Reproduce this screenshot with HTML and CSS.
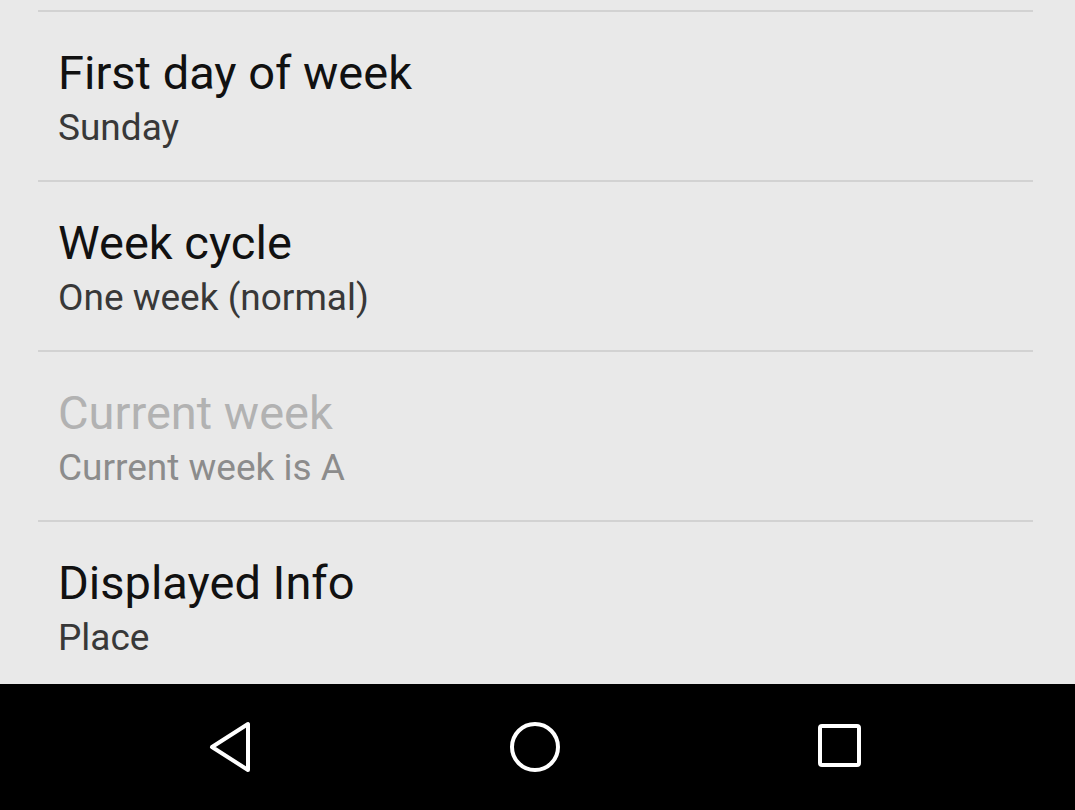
FILE: index.html
```html
<!DOCTYPE html>
<html lang="en">
<head>
<meta charset="utf-8">
<title>Settings</title>
<link rel="stylesheet" href="styles.css">
</head>
<body>
<div class="screen">
  <main class="list">
    <div class="divider"></div>
    <div class="row">
      <div class="title">First day of week</div>
      <div class="summary">Sunday</div>
    </div>
    <div class="divider"></div>
    <div class="row">
      <div class="title">Week cycle</div>
      <div class="summary">One week (normal)</div>
    </div>
    <div class="divider"></div>
    <div class="row disabled">
      <div class="title">Current week</div>
      <div class="summary">Current week is A</div>
    </div>
    <div class="divider"></div>
    <div class="row">
      <div class="title">Displayed Info</div>
      <div class="summary">Place</div>
    </div>
  </main>
  <nav class="navbar">
    <svg class="nav-icon" width="60" height="60" viewBox="0 0 60 60">
      <path d="M48 7 L48 53 L12 30 Z" fill="none" stroke="#fff" stroke-width="4" stroke-linejoin="round"/>
    </svg>
    <svg class="nav-icon" width="60" height="60" viewBox="0 0 60 60">
      <circle cx="30" cy="30" r="23" fill="none" stroke="#fff" stroke-width="4"/>
    </svg>
    <svg class="nav-icon" width="60" height="60" viewBox="0 0 60 60">
      <rect x="10" y="9" width="39" height="39" rx="2" fill="none" stroke="#fff" stroke-width="4"/>
    </svg>
  </nav>
</div>
</body>
</html>
```

FILE: styles.css
```css
html, body {
  margin: 0;
  padding: 0;
}

body {
  width: 1075px;
  height: 810px;
  overflow: hidden;
  background: #e9e9e9;
  font-family: Roboto, "Noto Sans", "Liberation Sans", sans-serif;
}

.screen {
  display: flex;
  flex-direction: column;
  height: 810px;
}

.list {
  height: 684px;
  overflow: hidden;
  padding-top: 10px;
  box-sizing: border-box;
  background: #e9e9e9;
}

.divider {
  height: 2px;
  margin: 0 42px 0 38px;
  background: #d2d2d2;
}

.row {
  display: flex;
  flex-direction: column;
  padding: 34px 40px 27px 58px;
}

.title {
  font-size: 47px;
  line-height: 54px;
  color: #111;
  white-space: nowrap;
}

.summary {
  margin-top: 3px;
  font-size: 37px;
  line-height: 50px;
  color: #383838;
  white-space: nowrap;
}

.row.disabled .title {
  color: #b2b2b2;
}

.row.disabled .summary {
  color: #8c8c8c;
}

.navbar {
  flex: 1;
  background: #000;
  display: flex;
  align-items: center;
  gap: 245px;
  padding-left: 200px;
}

.nav-icon {
  display: block;
}
```
